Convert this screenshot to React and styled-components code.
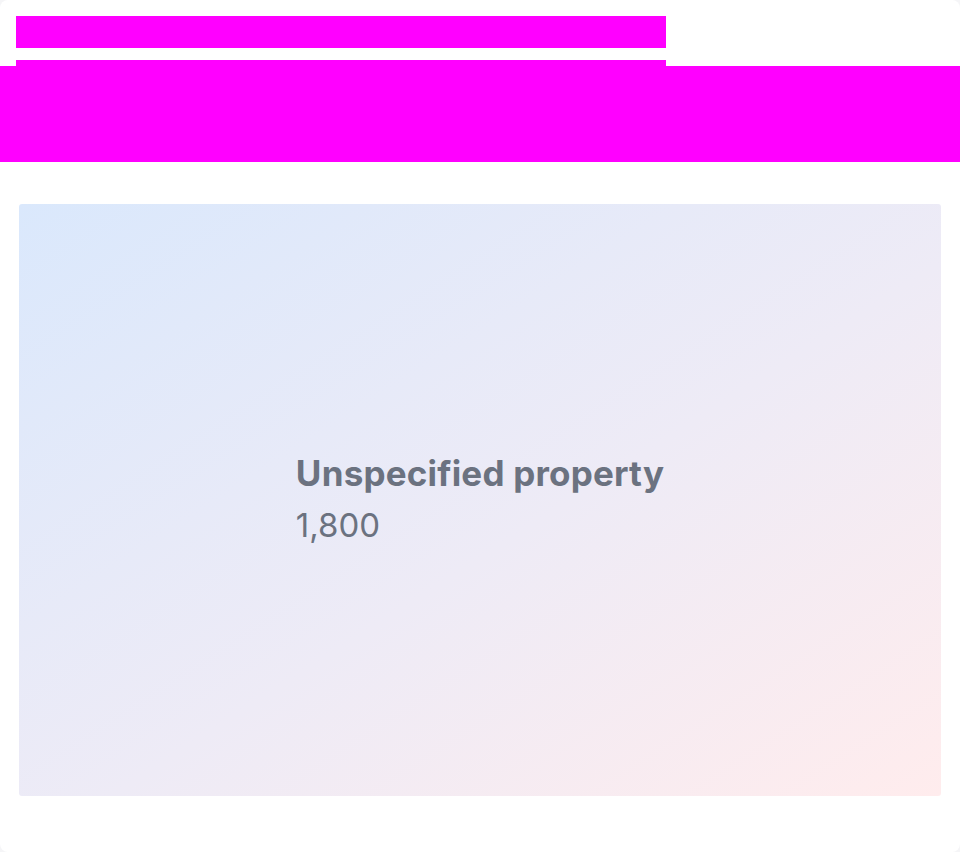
import React from 'react';
import styled, { createGlobalStyle } from 'styled-components';

const GlobalStyle = createGlobalStyle`
  html, body {
    margin: 0;
    padding: 0;
    background: #f5f5f7;
  }
  body {
    font-family: Inter, 'Noto Sans', sans-serif;
  }
`;

const Page = styled.div`
  width: 960px;
  height: 852px;
  box-sizing: border-box;
  background: #ffffff;
  border-radius: 8px;
  padding: 16px;
  display: flex;
  flex-direction: column;
  overflow: hidden;
`;

const Redacted = styled.div`
  background: #ff00ff;
  width: ${(p) => p.width || 'auto'};
  height: ${(p) => p.height}px;
  margin: ${(p) => p.margin || '0'};
  flex-shrink: 0;
`;

const StatCard = styled.div`
  margin: 42px 3px 0;
  height: 592px;
  border-radius: 3px;
  background: linear-gradient(to bottom right, #dae8fc, #eeebf6 55%, #ffeced);
  display: flex;
  align-items: center;
  justify-content: center;
`;

const StatBody = styled.div`
  display: flex;
  flex-direction: column;
  gap: 10px;
  padding-bottom: 4px;
  color: #6b7280;
`;

const StatLabel = styled.div`
  font-size: 35px;
  font-weight: 700;
  line-height: 43px;
  letter-spacing: 0.2px;
`;

const StatValue = styled.div`
  font-size: 33px;
  font-weight: 400;
  line-height: 40px;
`;

export default function App() {
  return (
    <>
      <GlobalStyle />
      <Page>
        <Redacted width="650px" height={32} />
        <Redacted width="650px" height={6} margin="12px 0 0" />
        <Redacted height={96} margin="0 -16px" />
        <StatCard>
          <StatBody>
            <StatLabel>Unspecified property</StatLabel>
            <StatValue>1,800</StatValue>
          </StatBody>
        </StatCard>
      </Page>
    </>
  );
}
